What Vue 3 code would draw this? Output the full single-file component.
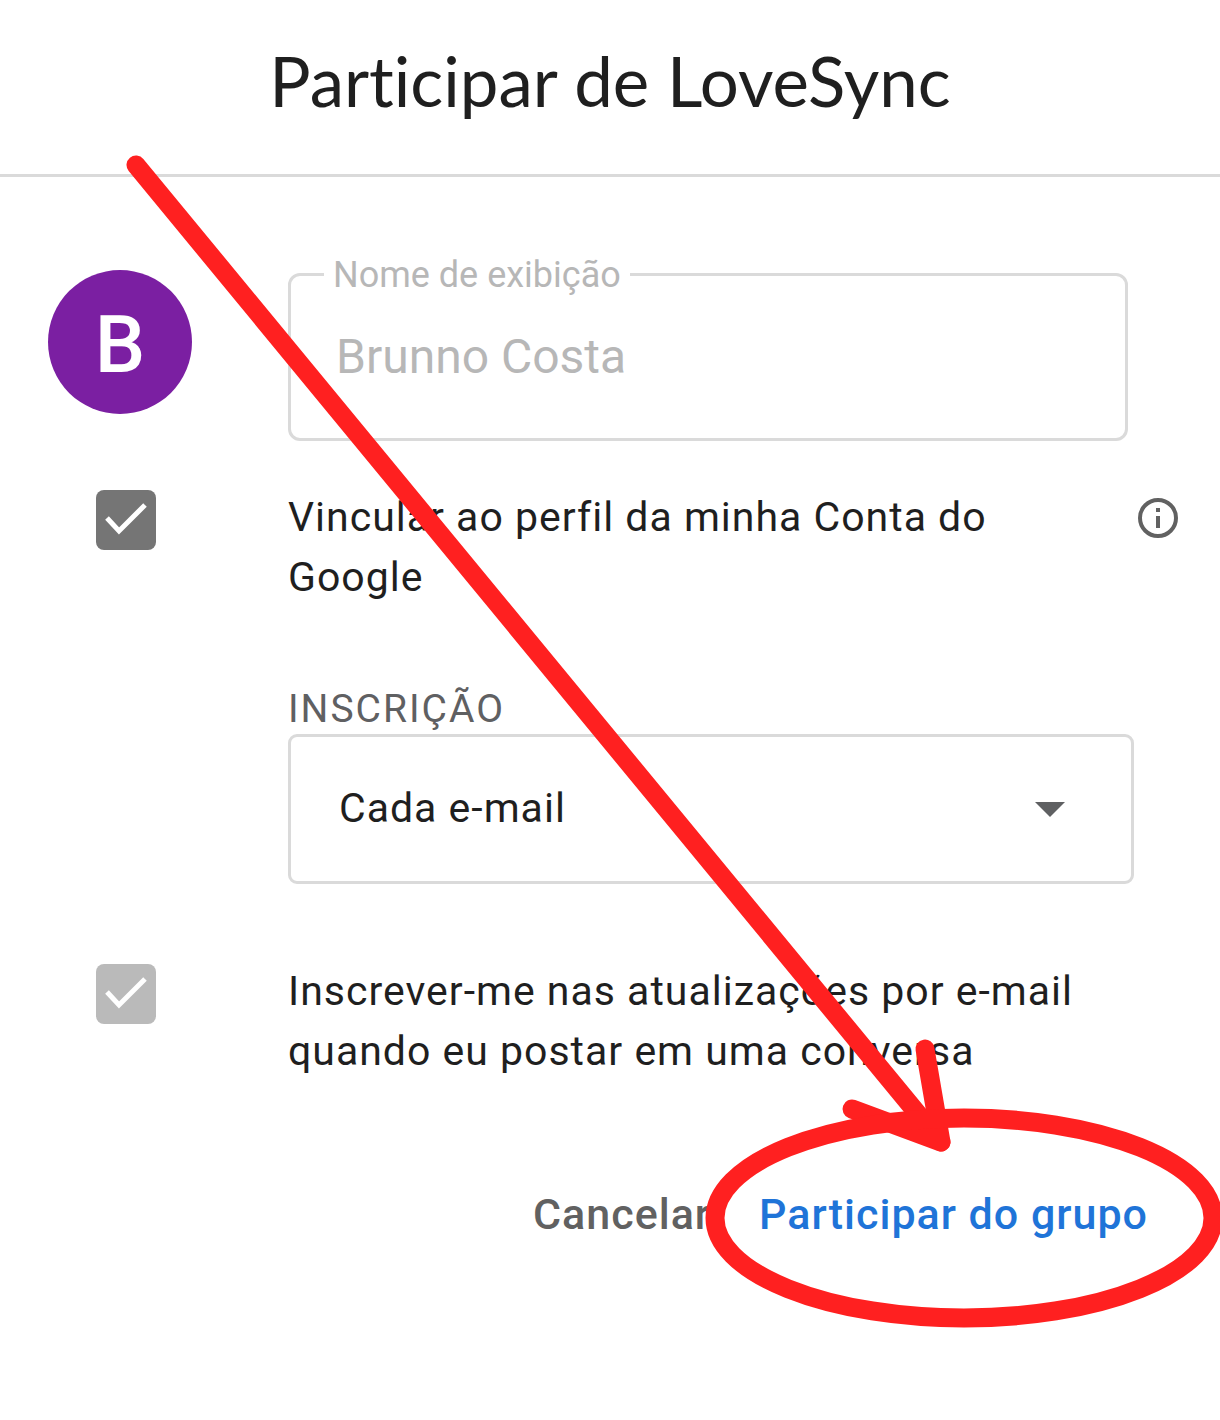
<template>
    <main class="dialog">
        <header class="dialog-header">
            <h1 class="dialog-title">Participar de LoveSync</h1>
        </header>
        <form class="dialog-form" @submit.prevent>
            <div class="row row-name">
                <div class="avatar">B</div>
                <div class="text-field">
                    <label for="display-name" class="text-field-label">Nome de exibição</label>
                    <input id="display-name" v-model="displayName" class="text-field-input" type="text" disabled>
                </div>
            </div>

            <div class="row row-link">
                <span class="checkbox">
                    <input id="link-profile" v-model="linkProfile" class="checkbox-input" type="checkbox">
                    <svg v-if="linkProfile" class="checkbox-mark" viewBox="0 0 60 60" fill="none" stroke="#fff" stroke-width="5">
                        <path d="M11 28L23 41L49 15"/>
                    </svg>
                </span>
                <label for="link-profile" class="row-text">Vincular ao perfil da minha Conta do Google</label>
                <button class="info" type="button" aria-label="Mais informações">
                    <svg class="info-icon" viewBox="0 0 40 40" fill="#616161">
                        <circle cx="20" cy="20" r="18" fill="none" stroke="#616161" stroke-width="4"/>
                        <path d="M18 10h4v4h-4zM18 18h4v12h-4z"/>
                    </svg>
                </button>
            </div>

            <div class="subscription">
                <label for="subscription" class="subscription-label">INSCRIÇÃO</label>
                <div class="select">
                    <select id="subscription" v-model="subscription" class="select-input">
                        <option v-for="option in options" :key="option" :value="option">{{ option }}</option>
                    </select>
                    <svg class="select-arrow" viewBox="0 0 30 15" fill="#5f6062">
                        <path d="M0 0h30L15 15z"/>
                    </svg>
                </div>
            </div>

            <div class="row row-updates">
                <span class="checkbox">
                    <input id="updates" v-model="updates" class="checkbox-input" type="checkbox" disabled>
                    <svg v-if="updates" class="checkbox-mark" viewBox="0 0 60 60" fill="none" stroke="#fff" stroke-width="5">
                        <path d="M11 28L23 41L49 15"/>
                    </svg>
                </span>
                <label for="updates" class="row-text">Inscrever-me nas atualizações por e-mail quando eu postar em uma conversa</label>
            </div>

            <div class="actions">
                <button class="action" type="button">Cancelar</button>
                <button class="action action-primary" type="submit">Participar do grupo</button>
            </div>
        </form>

        <svg class="pointer" viewBox="0 0 1220 1420" fill="none" stroke="#ff2020" stroke-width="19" stroke-linecap="round" stroke-linejoin="round" aria-hidden="true">
            <path d="M136 165L941 1142"/>
            <path d="M852 1109L941 1142L925 1049"/>
            <ellipse cx="964" cy="1218" rx="249" ry="100"/>
        </svg>
    </main>
</template>

<script setup>
import {ref} from "vue";

const options = ["Cada e-mail", "Resumo", "Abreviado", "Nenhum e-mail"];

const displayName = ref("Brunno Costa");
const linkProfile = ref(true);
const subscription = ref(options[0]);
const updates = ref(true);
</script>

<style>
body {
    margin: 0;
    background-color: #fff;
}
</style>

<style scoped>
.dialog {
    position: relative;
    padding-bottom: 160px;
    font-family: Roboto, "Liberation Sans", sans-serif;
    font-size: 41px;
    line-height: 60px;
    letter-spacing: 1px;
    color: #1f1f1f;
    overflow: hidden;
}

.dialog-header {
    padding: 39px 48px 51px;
    border-bottom: 3px solid #dadada;
}

.dialog-title {
    margin: 0;
    font-family: Lato, "Liberation Sans", sans-serif;
    font-size: 69px;
    font-weight: 400;
    font-variant-ligatures: none;
    line-height: 84px;
    letter-spacing: 0;
    text-align: center;
}

.dialog-form {
    padding: 93px 42px 0 48px;
}

.row {
    display: grid;
    grid-template-columns: 240px 1fr;
}

.row-name {
    padding-right: 50px;
}

.avatar {
    width: 144px;
    height: 144px;
    border-radius: 50%;
    background-color: #7b1fa2;
    color: #fff;
    font-size: 80px;
    font-weight: 500;
    line-height: 150px;
    letter-spacing: 0;
    text-align: center;
}

.text-field {
    position: relative;
    margin-top: 3px;
}

.text-field-label {
    position: absolute;
    left: 36px;
    top: -19px;
    padding: 0 9px;
    background-color: #fff;
    font-size: 36px;
    line-height: 42px;
    letter-spacing: 0;
    color: #b7b7b7;
}

.text-field-input {
    display: block;
    box-sizing: border-box;
    width: 100%;
    height: 168px;
    padding: 0 45px 2px;
    border: 3px solid #dadada;
    border-radius: 12px;
    background-color: #fff;
    font: inherit;
    font-size: 48px;
    color: #b7b7b7;
}

.row-link {
    grid-template-columns: 240px 1fr 100px;
    margin-top: 46px;
}

.row-text {
    max-width: 820px;
}

.checkbox {
    display: grid;
    width: 60px;
    height: 60px;
    margin: 3px 0 0 48px;
}

.checkbox-input {
    grid-area: 1 / 1;
    appearance: none;
    width: 60px;
    height: 60px;
    margin: 0;
    border-radius: 8px;
    background-color: #757575;
}

.checkbox-input:disabled {
    background-color: #bababa;
}

.checkbox-mark {
    grid-area: 1 / 1;
    width: 60px;
    height: 60px;
    pointer-events: none;
}

.info {
    justify-self: end;
    align-self: start;
    width: 40px;
    height: 40px;
    margin-top: 11px;
    padding: 0;
    border: 0;
    background-color: transparent;
    cursor: pointer;
}

.info-icon {
    display: block;
    width: 40px;
    height: 40px;
}

.subscription {
    margin: 77px 44px 0 240px;
}

.subscription-label {
    display: block;
    font-size: 39px;
    line-height: 50px;
    letter-spacing: 2px;
    color: #5f6062;
}

.select {
    display: grid;
    align-items: center;
}

.select-input {
    grid-area: 1 / 1;
    appearance: none;
    box-sizing: border-box;
    width: 100%;
    height: 150px;
    padding: 0 48px 2px;
    border: 3px solid #dadada;
    border-radius: 9px;
    background-color: #fff;
    font: inherit;
    letter-spacing: inherit;
    color: #1f1f1f;
}

.select-arrow {
    grid-area: 1 / 1;
    justify-self: end;
    width: 30px;
    height: 15px;
    margin-right: 69px;
    pointer-events: none;
}

.row-updates {
    margin-top: 77px;
}

.actions {
    display: flex;
    justify-content: flex-end;
    gap: 48px;
    margin-top: 103px;
    padding-right: 30px;
}

.action {
    padding: 0;
    border: 0;
    background-color: transparent;
    font: inherit;
    font-size: 43px;
    font-weight: 500;
    letter-spacing: 1px;
    color: #616161;
    cursor: pointer;
}

.action-primary {
    color: #1f74d8;
}

.pointer {
    position: absolute;
    top: 0;
    left: 0;
    width: 100%;
    pointer-events: none;
}
</style>
